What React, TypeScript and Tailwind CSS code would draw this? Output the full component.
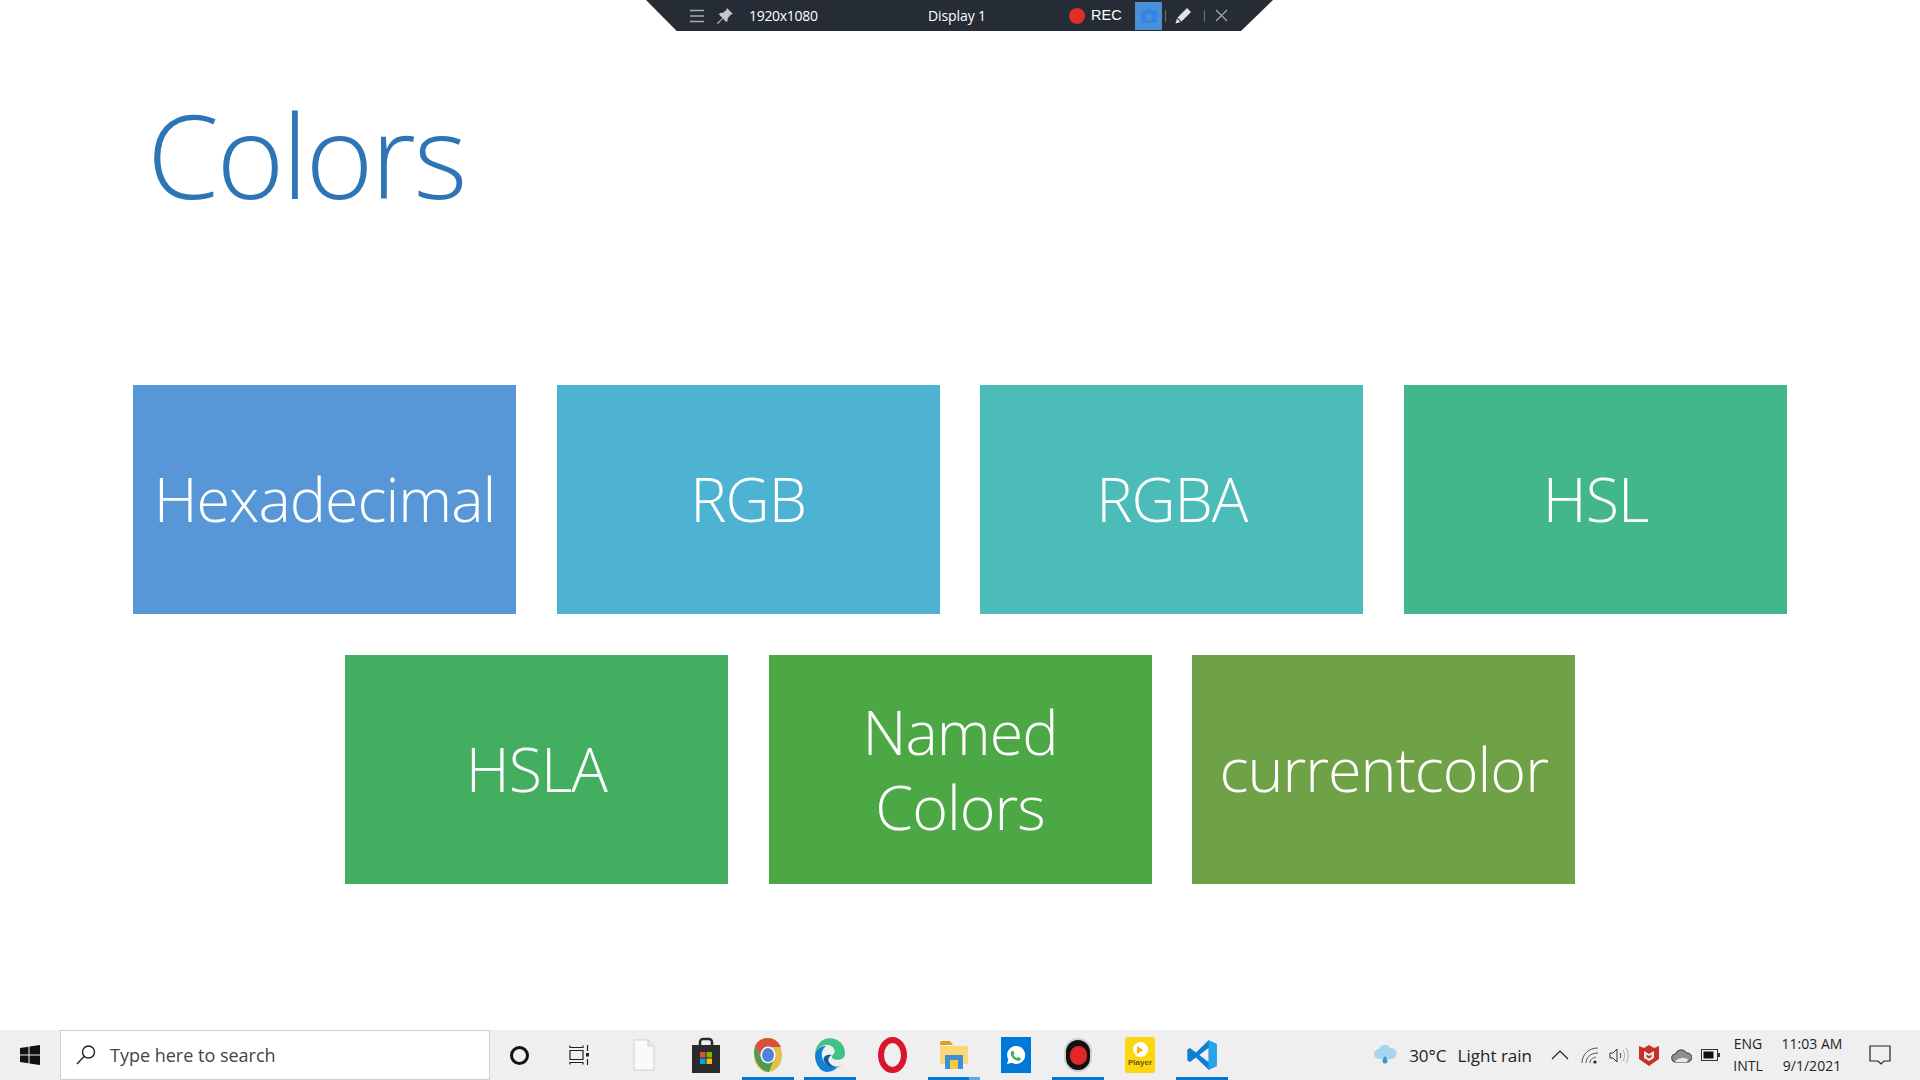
import React from "react";

const font = { fontFamily: '"Open Sans", "Noto Sans", sans-serif' };

function Tile({ label, bg }: { label: React.ReactNode; bg: string }) {
  return (
    <div className={`w-[383px] h-[229px] pb-[2px] flex items-center justify-center text-center text-white font-light text-[61px] leading-[75px] tracking-[-1px] ${bg}`}>
      {label}
    </div>
  );
}

function Slot({ active, children, extra }: { active?: boolean; children: React.ReactNode; extra?: boolean }) {
  return (
    <div className="relative w-[62px] h-[50px] flex items-center justify-center">
      {children}
      {active && <div className="absolute bottom-0 left-[5px] w-[52px] h-[3px] bg-[#0078d7]" />}
      {extra && <div className="absolute bottom-0 left-[46px] w-[11px] h-[3px] bg-[#5da8e6]" />}
    </div>
  );
}

function Toolbar() {
  return (
    <div className="absolute z-10 top-0 left-[646px] w-[627px] h-[31px] bg-[#262c36] [clip-path:polygon(0_0,100%_0,94.9%_100%,4.9%_100%)] flex items-center text-white text-[14px]" style={{ fontFamily: '"Open Sans", sans-serif' }}>
      <svg className="ml-[43px]" width="16" height="16" viewBox="0 0 16 16" stroke="#a9adb3" strokeWidth="1.4"><path d="M1 2.500h14M1 8h14M1 13.500h14" /></svg>
      <svg className="ml-[11px]" width="18" height="18" viewBox="0 0 18 18" fill="#c4c6ca"><path d="M11 1l6 6-2 .6-3.200 3.400-.3 3-1.400 1L7 11.500 2 17l-1-.8L6.500 11 3 7.500l1-1.400 3-.3L10.400 3z" /></svg>
      <span className="ml-[15px] w-[179px] tracking-[-0.3px]">1920x1080</span>
      <span className="w-[141px] tracking-[-0.1px]">Display 1</span>
      <span className="w-[16px] h-[16px] rounded-full bg-[#e02b2b]" />
      <span className="ml-[6px] w-[44px] text-[14.500px]" style={{ fontFamily: '"Liberation Sans", sans-serif' }}>REC</span>
      <div className="w-[27px] h-[28px] bg-[#4a8fd8] flex items-center justify-center">
        <svg width="18" height="16" viewBox="0 0 18 16" fill="#2e86e8"><path d="M1 3h4l1.500-2h5L13 3h4v12H1z" /><circle cx="9" cy="9" r="3.500" fill="#4a8fd8" /></svg>
      </div>
      <div className="ml-[3px] w-px h-[12px] bg-[#6b7078]" />
      <svg className="ml-[8px]" width="18" height="18" viewBox="0 0 18 18" fill="#e2e3e5"><path d="M13 1l4 4-9.500 9.500-4-4zM3 11.500l3.500 3.500L1.500 16.500z" /></svg>
      <div className="ml-[12px] w-px h-[12px] bg-[#6b7078]" />
      <svg className="ml-[10px]" width="13" height="13" viewBox="0 0 13 13" stroke="#a9adb3" strokeWidth="1.100"><path d="M1 1l11 11M12 1L1 12" /></svg>
    </div>
  );
}

function Taskbar() {
  return (
    <div className="relative h-[50px] shrink-0 bg-[#efefef] flex items-center" style={{ fontFamily: '"Open Sans", sans-serif' }}>
      <div className="w-[60px] flex justify-center">
        <svg width="20" height="20" viewBox="0 0 20 20" fill="#111"><path d="M0 3l8.500-1.200v7.700H0zM9.500 1.600L20 0v9.500H9.500zM0 10.500h8.500v7.700L0 17zM9.500 10.500H20V20L9.500 18.400z" /></svg>
      </div>
      <div className="w-[430px] h-[50px] bg-white border border-[#cfcfcf] flex items-center pl-[14px] text-[18px] text-[#444]">
        <svg width="22" height="22" viewBox="0 0 22 22" fill="none" stroke="#222" strokeWidth="1.400"><circle cx="13.500" cy="8" r="6" /><path d="M9 12.500L2 20" /></svg>
        <span className="ml-[13px]">Type here to search</span>
      </div>
      <div className="w-[58px] flex justify-center">
        <div className="w-[19px] h-[19px] rounded-full border-[3px] border-[#111]" />
      </div>
      <div className="w-[65px] flex justify-center">
        <svg width="24" height="22" viewBox="0 0 24 22" fill="none" stroke="#222" strokeWidth="1.200"><path d="M1 1.500v2h13v-2M1 6.500h13v9H1zM1 20.500v-2h13v2M18.500 1v6M18.500 15v6" /><rect x="17" y="9" width="3" height="3.500" fill="#222" stroke="none" /></svg>
      </div>
      <Slot>
        <svg width="22" height="32" viewBox="0 0 22 32"><path d="M1 1h14l6 6v24H1z" fill="#fafafa" stroke="#cfcfcf" /><path d="M15 1v6h6" fill="#e9e9e9" stroke="#cfcfcf" /></svg>
      </Slot>
      <Slot>
        <svg width="30" height="36" viewBox="0 0 30 36"><path d="M9 9V5a3 3 0 0 1 3-3h6a3 3 0 0 1 3 3v4" fill="none" stroke="#2b2b2b" strokeWidth="2.500" /><path d="M1 8h28v28H1z" fill="#2b2b2b" /><rect x="9" y="15" width="5.500" height="5.500" fill="#e8522b" /><rect x="15.500" y="15" width="5.500" height="5.500" fill="#7db800" /><rect x="9" y="21.500" width="5.500" height="5.500" fill="#00a3e8" /><rect x="15.500" y="21.500" width="5.500" height="5.500" fill="#ffb900" /></svg>
      </Slot>
      <Slot active>
        <svg width="28" height="34" viewBox="0 0 28 34"><ellipse cx="14" cy="17" rx="14" ry="17" fill="#e2c14a" /><path d="M14 0C8 0 3 3 1 8l6 11a8 8 0 0 1 7-10h13C25 4 20 0 14 0z" fill="#d9503f" /><path d="M1 8C-1 14 0 24 8 31c2 2 5 3 7 3l5-13a8 8 0 0 1-13-2z" fill="#4a9c54" /><ellipse cx="14" cy="17" rx="7.500" ry="8.500" fill="#fff" /><ellipse cx="14" cy="17" rx="6" ry="7" fill="#4e84e0" /></svg>
      </Slot>
      <Slot active>
        <svg width="30" height="36" viewBox="0 0 32 36"><path d="M0 18C0 8 7 0 16 0c9 0 16 7 16 16 0 5-4 7-8 7-3 0-6-1-6-3 0-2 3-3 3-6 0-4-4-7-9-7C7 7 1 12 0 18z" fill="#3ec384" /><path d="M0 18c1-6 6-10 12-10-4 3-6 8-4 14 2 6 9 10 16 9-3 3-7 5-11 5C5 36 0 27 0 18z" fill="#0f82d6" /><path d="M9 22c1 6 7 10 14 9 3 0 5-1 7-3-3 3-10 4-14-1-3-3-2-7 2-9-4-1-8 0-9 4z" fill="#0c5aa6" /></svg>
      </Slot>
      <Slot>
        <svg width="29" height="36" viewBox="0 0 29 36"><ellipse cx="14.500" cy="18" rx="11.500" ry="15" fill="none" stroke="#d8162c" strokeWidth="6" /></svg>
      </Slot>
      <Slot active extra>
        <svg width="28" height="30" viewBox="0 0 28 30"><path d="M0 3a2 2 0 0 1 2-2h8l3 4H0z" fill="#e0a21a" /><path d="M0 6h28v18H0z" fill="#fbd876" /><path d="M5 29V15h18v14h-5v-9h-8v9z" fill="#3d8fd6" /><rect x="10" y="20" width="8" height="9" fill="#f6c945" /></svg>
      </Slot>
      <Slot>
        <div className="w-[30px] h-[36px] bg-[#0078d7] flex items-center justify-center">
          <svg width="20" height="20" viewBox="0 0 20 20"><path d="M10 1a9 9 0 0 0-7.700 13.500L1 19l4.700-1.200A9 9 0 1 0 10 1z" fill="#fff" /><path d="M7 5.500l1.500 3-1 1.200c.7 1.500 1.800 2.500 3.300 3.300l1.200-1 3 1.500c-.4 2-2 2.500-3.500 2.200-3.500-.8-6-3.500-6.700-6.500-.3-1.500.5-3 2.200-3.700z" fill="#2fb457" /></svg>
        </div>
      </Slot>
      <Slot active>
        <div className="w-[28px] h-[34px] rounded-full bg-[#111] border-2 border-[#cfcfcf] flex items-center justify-center">
          <div className="w-[17px] h-[19px] rounded-full bg-[#e3262a]" />
        </div>
      </Slot>
      <Slot>
        <div className="w-[30px] h-[36px] rounded-[3px] bg-[#fcd611] flex flex-col items-center pt-[5px]">
          <div className="w-[15px] h-[15px] rounded-full bg-white flex items-center justify-center"><div className="w-0 h-0 border-y-[4px] border-y-transparent border-l-[6px] border-l-[#f3b700]" /></div>
          <span className="text-[8px] leading-[12px] font-bold text-[#6b5a00]" style={{ fontFamily: '"Liberation Sans", sans-serif' }}>Player</span>
        </div>
      </Slot>
      <Slot active>
        <svg width="32" height="38" viewBox="0 0 24 24"><path d="M17 1l6 2.800v16.400L17 23 7.500 13.800 3 17.200 1 16.200v-8.400l2-1 4.500 3.400z" fill="#0e7fd0" /><path d="M17 6.500L10 12l7 5.500z" fill="#efefef" /><path d="M17 1l6 2.800v16.400L17 23z" fill="#2aa3ee" /></svg>
      </Slot>
      <div className="grow" />
      <div className="flex items-center h-full text-[17px] text-[#222]">
        <svg width="24" height="20" viewBox="0 0 24 20"><path d="M6 14a5 5 0 0 1 0-10 6 6 0 0 1 11-1 5.500 5.500 0 0 1 2 11z" fill="#a9d4ef" /><path d="M12 11c-1.500 2-2.500 3.500-2.500 5a2.500 2.500 0 0 0 5 0c0-1.500-1-3-2.500-5z" fill="#3a97dc" /></svg>
        <span className="ml-[12px] mt-[2px]">30°C</span>
        <span className="ml-[11px] mt-[2px]">Light rain</span>
        <svg className="ml-[19px]" width="18" height="10" viewBox="0 0 18 10" fill="none" stroke="#222" strokeWidth="1.200"><path d="M1 9l8-8 8 8" /></svg>
        <svg className="ml-[12px]" width="18" height="17" viewBox="0 0 18 17" fill="none" stroke="#555" strokeWidth="1"><path d="M1 16C1 8 7 1 17 1M5 16c0-5 4-10 12-10M9 16c0-3 2-5 6-6" /><circle cx="14" cy="15" r="1.600" fill="#222" stroke="none" /></svg>
        <svg className="ml-[10px]" width="20" height="17" viewBox="0 0 20 17" fill="none" stroke="#333" strokeWidth="1"><path d="M1 6h3l4-4v13l-4-4H1zM11 6c1 1 1 4 0 5" /><path d="M14 3c2 3 2 8 0 11M17 1c3 4 3 11 0 15" stroke="#aaa" /></svg>
        <svg className="ml-[10px]" width="20" height="22" viewBox="0 0 20 22"><path d="M0 2l5 2 5-3 5 3 5-2v13l-10 7L0 15z" fill="#c9302c" /><path d="M5 7l5 3 5-3v7l-5 3-5-3z" fill="#efefef" /><path d="M7.500 10.500l2.500 1.500 2.500-1.500v2.500L10 14.500 7.500 13z" fill="#c9302c" /></svg>
        <svg className="ml-[12px]" width="21" height="15" viewBox="0 0 21 15"><path d="M5 14a4 4 0 0 1-.5-8 6 6 0 0 1 11-1 4.500 4.500 0 0 1 1.500 9z" fill="#8f8f8f" stroke="#333" strokeWidth="1" /><path d="M4 14c2-4 8-5 13-3l-1 3z" fill="#e8e8e8" /></svg>
        <svg className="ml-[9px]" width="19" height="12" viewBox="0 0 19 12"><rect x=".5" y=".5" width="16" height="11" fill="none" stroke="#333" /><rect x="2.500" y="2.500" width="10" height="7" fill="#111" /><rect x="17" y="4" width="2" height="4" fill="#333" /></svg>
        <div className="ml-[11px] w-[34px] flex flex-col items-center text-[14px] leading-[22px]"><span>ENG</span><span>INTL</span></div>
        <div className="ml-[14px] w-[66px] flex flex-col items-center text-[14px] leading-[22px]"><span>11:03 AM</span><span>9/1/2021</span></div>
        <svg className="ml-[24px] mr-[29px]" width="22" height="21" viewBox="0 0 22 21" fill="none" stroke="#222" strokeWidth="1.200"><path d="M1 1h20v15h-6l-3 3-3-3H1z" /></svg>
      </div>
    </div>
  );
}

export default function App() {
  return (
    <div className="relative w-[1920px] h-[1080px] bg-white flex flex-col overflow-hidden" style={font}>
      <Toolbar />
      <div className="grow flex flex-col blur-[0.4px]">
        <h1 className="ml-[147px] mt-[96px] h-[116px] text-[#2e75b6] font-light text-[116px] leading-[116px] tracking-[-2.6px]">Colors</h1>
        <div className="mt-[173px] flex flex-col items-center gap-[41px]">
          <div className="flex gap-x-[40.670px]">
            <Tile label="Hexadecimal" bg="bg-[#5797d8]" />
            <Tile label="RGB" bg="bg-[#4eb2d2]" />
            <Tile label="RGBA" bg="bg-[#4bbcb8]" />
            <Tile label="HSL" bg="bg-[#43b78c]" />
          </div>
          <div className="flex gap-x-[40.670px]">
            <Tile label="HSLA" bg="bg-[#43ae60]" />
            <Tile label={<>Named<br />Colors</>} bg="bg-[#4ba844]" />
            <Tile label="currentcolor" bg="bg-[#6fa246]" />
          </div>
        </div>
      </div>
      <Taskbar />
    </div>
  );
}
